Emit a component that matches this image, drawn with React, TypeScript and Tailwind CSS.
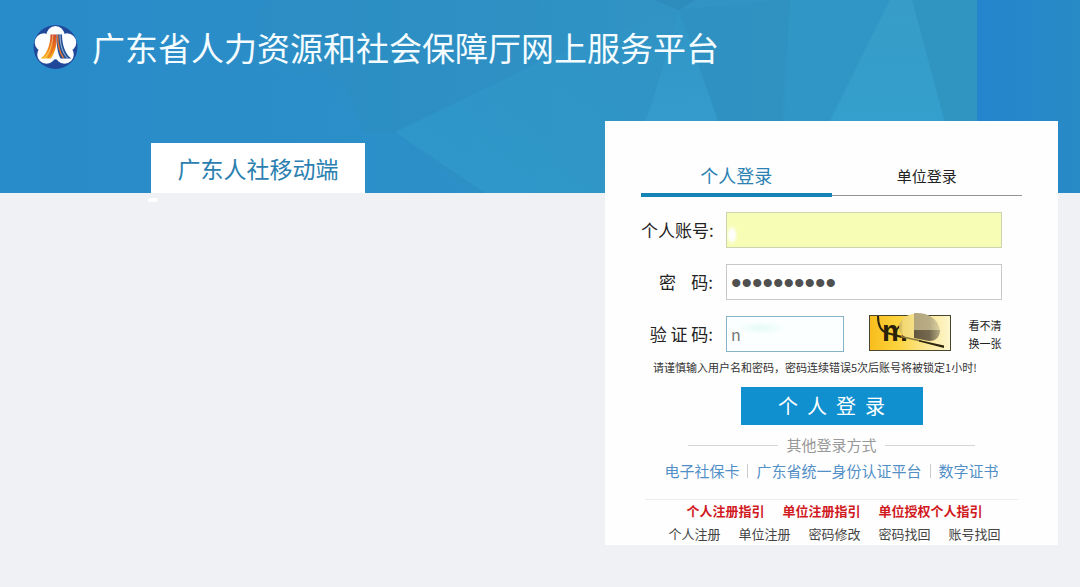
import React from "react";

function HeaderBackdrop() {
  return (
    <svg
      className="absolute inset-0 h-full w-full"
      viewBox="0 0 1080 193"
      preserveAspectRatio="none"
      aria-hidden="true"
    >
      <defs>
        <linearGradient id="base" x1="0" y1="0" x2="1" y2="0">
          <stop offset="0" stopColor="#288ac9" />
          <stop offset="0.35" stopColor="#2c8fc6" />
          <stop offset="0.6" stopColor="#3093c4" />
          <stop offset="0.9" stopColor="#3195c2" />
        </linearGradient>
        <linearGradient id="edge" x1="0" y1="0" x2="1" y2="0">
          <stop offset="0" stopColor="#2485cd" />
          <stop offset="1" stopColor="#288bc6" />
        </linearGradient>
        <linearGradient id="peak" x1="0" y1="0" x2="0" y2="1">
          <stop offset="0" stopColor="#379cc8" />
          <stop offset="0.7" stopColor="#349fcd" />
        </linearGradient>
        <linearGradient id="ray" x1="0" y1="0" x2="0" y2="1">
          <stop offset="0" stopColor="#3096c6" />
          <stop offset="1" stopColor="#38a2d4" />
        </linearGradient>
        <linearGradient id="slope" x1="1" y1="0" x2="0" y2="1">
          <stop offset="0" stopColor="#3093c4" />
          <stop offset="1" stopColor="#309bcd" />
        </linearGradient>
      </defs>
      <rect width="1080" height="193" fill="url(#base)" />
      <path d="M0 0H180L270 16L250 70L320 78L365 132L395 132L470 193H0Z" fill="#2a8eca" opacity="0.35" />
      <path d="M270 0H540L520 72L395 132H365L345 85L250 25Z" fill="#2f8fc0" opacity="0.35" />
      <path d="M395 132L540 62L676 10L650 110L605 193H485Z" fill="url(#slope)" opacity="0.7" />
      <path d="M655 0H695L679 10Z" fill="#2b86b6" opacity="0.5" />
      <path d="M679 10L720 127L700 193H605L650 110Z" fill="url(#ray)" opacity="0.8" />
      <path d="M679 10L790 0L775 193H745Z" fill="#2d8fc0" opacity="0.5" />
      <path d="M790 0H890L828 125V193H780Z" fill="#3198c6" opacity="0.6" />
      <path d="M890 0H912L946 127V193H795L828 125Z" fill="url(#peak)" />
      <rect x="977" width="103" height="193" fill="url(#edge)" />
    </svg>
  );
}

function Emblem() {
  return (
    <svg className="h-[46px] w-[46px] shrink-0" viewBox="0 0 46 46" role="img" aria-label="广东人社">
      <defs>
        <linearGradient id="flame" x1="0" y1="0" x2="0" y2="1">
          <stop offset="0" stopColor="#cf4a2c" />
          <stop offset="0.55" stopColor="#f0821a" />
          <stop offset="1" stopColor="#f9b51d" />
        </linearGradient>
      </defs>
      <circle cx="23.5" cy="23" r="22" fill="#20489a" />
      <g fill="#fbfdff">
        <circle cx="23.5" cy="11" r="9" />
        <circle cx="12" cy="18.5" r="9.3" />
        <circle cx="35" cy="18.5" r="9.3" />
        <circle cx="14.5" cy="30.5" r="9.3" />
        <circle cx="32.5" cy="30.5" r="9.3" />
        <circle cx="23.5" cy="23" r="12.5" />
      </g>
      <path d="M18.5 10.5H24.5V17C24.5 24 21.5 31 19 34.5H8.5C14 31 18.5 22 18.5 10.5Z" fill="url(#flame)" />
      <path d="M20.7 11C20.7 21 17 29.5 12.5 34" fill="none" stroke="#fbd48a" strokeWidth="0.7" />
      <path d="M22.8 11C22.8 21 20 29 16 34" fill="none" stroke="#d9532c" strokeWidth="0.8" />
      <path d="M24.5 10.5H30C30 22 34 31 39.5 34.5H28.5C25.5 29 24.5 21 24.5 10.5Z" fill="#234f96" />
      <path d="M25.6 11C25.6 20 28 29 31.5 34" fill="none" stroke="#e8702c" strokeWidth="1.4" />
      <path d="M28 11C28 21 31 30 35.5 34" fill="none" stroke="#c9dcf0" strokeWidth="0.8" />
      <path d="M23.5 35L20 44H27Z" fill="#20489a" />
    </svg>
  );
}

function Captcha() {
  return (
    <svg className="-mt-1 h-10 w-[83px] shrink-0" viewBox="0 0 83 40" role="img" aria-label="验证码图片">
      <defs>
        <linearGradient id="gold" x1="0" y1="0" x2="1" y2="0">
          <stop offset="0" stopColor="#f9bd1c" />
          <stop offset="0.35" stopColor="#fcd33d" />
          <stop offset="0.7" stopColor="#fbe792" />
          <stop offset="1" stopColor="#fdf6cf" />
        </linearGradient>
        <linearGradient id="smudgeLeft" x1="0" y1="0" x2="1" y2="0">
          <stop offset="0" stopColor="#c9ae5a" />
          <stop offset="0.3" stopColor="#f3d873" />
          <stop offset="1" stopColor="#f5df85" />
        </linearGradient>
        <linearGradient id="smudgeRight" x1="0" y1="0" x2="1" y2="0">
          <stop offset="0" stopColor="#b3a67c" />
          <stop offset="0.6" stopColor="#b9ad86" />
          <stop offset="1" stopColor="#ddd3a2" />
        </linearGradient>
        <linearGradient id="smudgeDark" x1="0" y1="0" x2="1" y2="0">
          <stop offset="0" stopColor="#64573f" />
          <stop offset="0.6" stopColor="#756a50" />
          <stop offset="1" stopColor="#b5aa80" />
        </linearGradient>
      </defs>
      <rect x="0.5" y="3.5" width="81" height="35" fill="url(#gold)" stroke="#4a452f" />
      <text x="13" y="29" fontFamily="Liberation Sans" fontWeight="700" fontSize="29" fill="#2a2108">
        m
      </text>
      <path d="M45 2C36 3 30 9 30 15C30 21 35 27 45 28Z" fill="url(#smudgeLeft)" />
      <path d="M45 1C58 0 69 6 71 18H45Z" fill="url(#smudgeRight)" />
      <path d="M45 18H71C71 24 68 29 60 29L45 26Z" fill="url(#smudgeDark)" />
      <path d="M9 4C9 13 11 19 18 21C26 23 29 24 33 25" fill="none" stroke="#2c240d" strokeWidth="2" />
      <path d="M32 24.5L52 29" fill="none" stroke="#8d7a3c" strokeWidth="1.5" />
      <path d="M50 28L75 33.5V36L50 29.5Z" fill="#2c240d" />
    </svg>
  );
}

const labelClass = "w-[72px] shrink-0 whitespace-pre text-right text-[17px] leading-6 text-[#222]";

const otherLogins = ["电子社保卡", "广东省统一身份认证平台", "数字证书"];
const guides = ["个人注册指引", "单位注册指引", "单位授权个人指引"];
const services = ["个人注册", "单位注册", "密码修改", "密码找回", "账号找回"];

function LoginCard() {
  return (
    <section className="relative -mt-[72px] mr-[22px] w-[453px] max-w-full bg-[#fefefe] px-9 pt-[35px] pb-px">
      <div className="flex items-start" role="tablist">
        <button
          type="button"
          role="tab"
          aria-selected="true"
          className="h-[41px] flex-1 border-b-4 border-[#1683b7] text-lg leading-9 text-[#2b82b3]"
        >
          个人登录
        </button>
        <button
          type="button"
          role="tab"
          aria-selected="false"
          className="h-10 flex-1 border-b border-[#8f9498] text-[15px] leading-9 text-[#222]"
        >
          单位登录
        </button>
      </div>

      <form className="mt-[15px]" onSubmit={(e) => e.preventDefault()}>
        <div className="flex flex-col gap-4">
          <div className="flex items-center gap-[13px]">
            <label htmlFor="account" className={labelClass}>个人账号:</label>
            <input
              id="account"
              type="text"
              className="mr-5 h-9 min-w-0 flex-1 border border-[#cdd3b0] bg-[#f7fdb5] bg-[radial-gradient(ellipse_6px_10px_at_5px_22px,#ffffff_40%,transparent)] px-[5px] outline-none"
            />
          </div>
          <div className="flex items-center gap-[13px]">
            <label htmlFor="password" className={labelClass}>{"密    码:"}</label>
            <input
              id="password"
              type="password"
              defaultValue="0123456789"
              className="mr-5 h-9 min-w-0 flex-1 border border-[#c8c8c8] bg-white px-1 font-['Liberation_Sans',sans-serif] text-[30px] text-[#505050] outline-none"
            />
          </div>
          <div className="flex items-center gap-[13px]">
            <label htmlFor="captcha" className={labelClass}>{"验 证 码:"}</label>
            <div className="mr-5 flex h-9 min-w-0 flex-1 items-center">
              <input
                id="captcha"
                type="text"
                defaultValue="n"
                className="h-9 w-[118px] border border-[#86b3c8] bg-[#fcffff] bg-[radial-gradient(ellipse_26px_7px_at_34px_11px,#e6fbf6,transparent)] px-1 text-base text-[#777] outline-none"
              />
              <div className="ml-[25px] flex flex-1 items-center justify-between">
                <Captcha />
                <button type="button" className="w-[34px] text-[11px] leading-[18px] text-[#222]">
                  看不清
                  <br />
                  换一张
                </button>
              </div>
            </div>
          </div>
        </div>

        <p className="mt-[7px] pl-3 text-[11px] leading-4 text-[#333]">
          请谨慎输入用户名和密码，密码连续错误5次后账号将被锁定1小时!
        </p>
        <button
          type="submit"
          className="mx-auto mt-3 block h-[38px] w-[182px] whitespace-pre bg-[#1090cf] text-xl leading-9 text-white"
        >
          {"个  人  登  录"}
        </button>
      </form>

      <div className="mt-[10px] flex items-center justify-center gap-2 text-[15px] leading-5 text-[#999]">
        <span className="h-px w-[90px] bg-[#d5d5d5]" />
        <span>其他登录方式</span>
        <span className="h-px w-[90px] bg-[#d5d5d5]" />
      </div>
      <nav className="mt-[6px] flex items-center justify-center gap-2 text-[15px] leading-5 text-[#528fc6]">
        {otherLogins.map((name, i) => (
          <React.Fragment key={name}>
            {i > 0 && <span className="h-[14px] w-px bg-[#c9cdd1]" />}
            <a href="#">{name}</a>
          </React.Fragment>
        ))}
      </nav>

      <hr className="mx-1 mt-[18px] border-[#ededed]" />
      <nav className="mt-px flex justify-center gap-[18px] pl-[6px] text-[13px] font-bold leading-5 text-[#d11a1f]">
        {guides.map((name) => (
          <a key={name} href="#">{name}</a>
        ))}
      </nav>
      <nav className="mt-[3px] flex justify-center gap-[18px] pl-[6px] text-[13px] leading-5 text-[#444]">
        {services.map((name) => (
          <a key={name} href="#">{name}</a>
        ))}
      </nav>
    </section>
  );
}

export default function App() {
  return (
    <div className="min-h-screen bg-[#eff1f5] font-['Noto_Sans_CJK_SC',sans-serif]">
      <header className="relative flex h-[193px] flex-col justify-between">
        <HeaderBackdrop />
        <div className="relative flex items-center gap-[14px] pt-6 pl-8">
          <Emblem />
          <h1 className="whitespace-nowrap text-[33px] leading-[46px] text-[#f4fcff]">
            广东省人力资源和社会保障厅网上服务平台
          </h1>
        </div>
        <h2 className="relative ml-[151px] w-[214px] bg-white text-center text-[23px] leading-[50px] text-[#2b80b0]">
          广东人社移动端
          <span className="absolute -bottom-[9px] -left-[3px] h-1 w-[10px] rounded-full bg-white" />
        </h2>
      </header>
      <main className="flex justify-end">
        <LoginCard />
      </main>
    </div>
  );
}
